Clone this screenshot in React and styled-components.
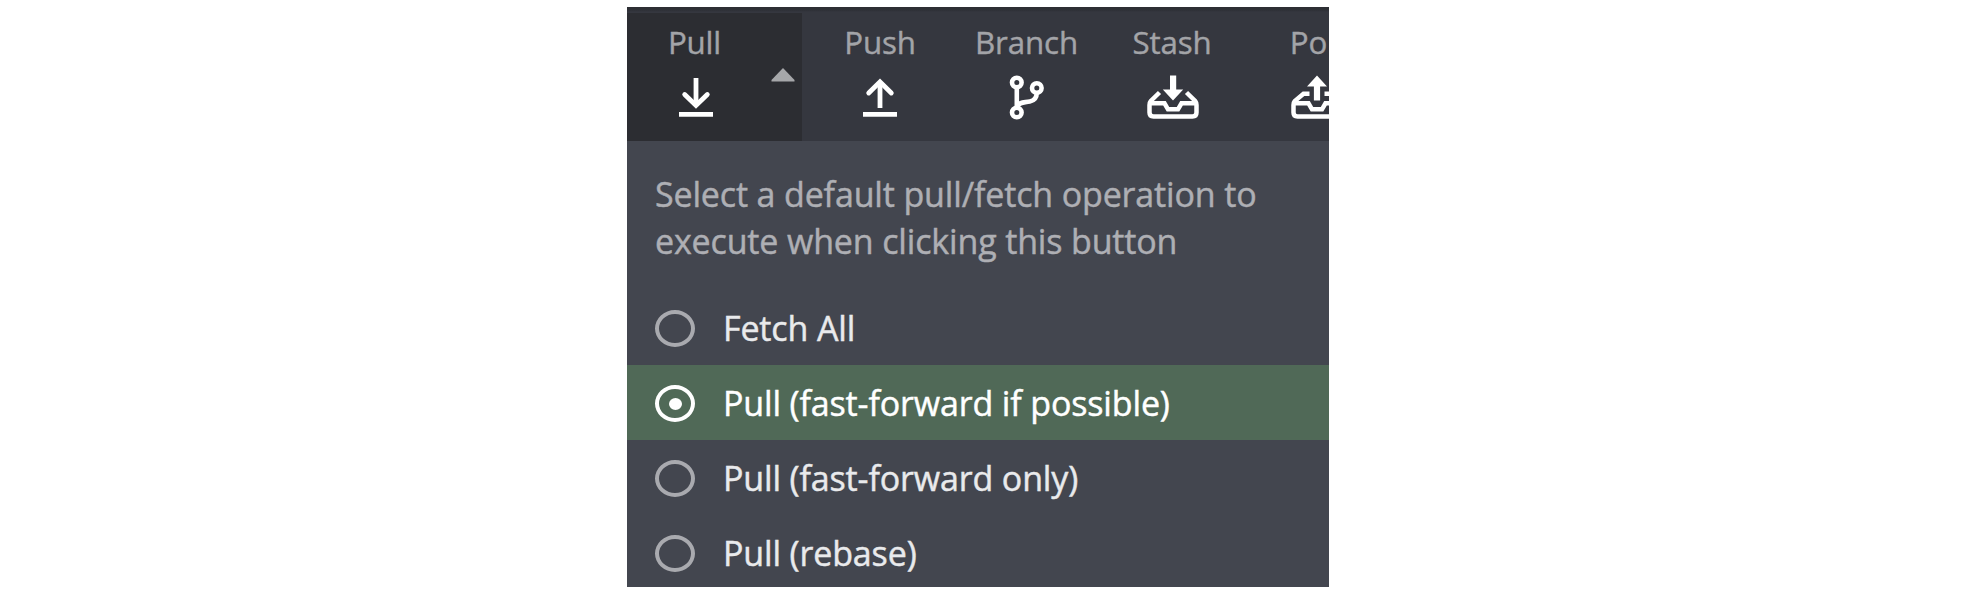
import React, { useState } from "react";
import styled, { createGlobalStyle } from "styled-components";

const GlobalStyle = createGlobalStyle`
  body {
    margin: 0;
    background: #ffffff;
    font-family: "Open Sans", "Noto Sans", sans-serif;
  }
`;

const Page = styled.main`
  box-sizing: border-box;
  height: 590px;
  padding: 7px 0 0 627px;
  overflow: hidden;
`;

const Panel = styled.section`
  width: 702px;
  height: 580px;
  overflow: hidden;
  background: #43464f;
`;

const Toolbar = styled.header`
  box-sizing: border-box;
  display: flex;
  height: 134px;
  padding-top: 6px;
  background: linear-gradient(#2d2e33 0, #2e3036 3px, #35373f 5px);
`;

const Tool = styled.button`
  box-sizing: border-box;
  flex: none;
  display: flex;
  flex-direction: column;
  align-items: center;
  width: ${(p) => p.$width}px;
  height: 128px;
  padding: 7px 0 0;
  border: 0;
  background: none;
  color: #ffffff;
  font: inherit;
`;

const PullGroup = styled.div`
  flex: none;
  display: flex;
  width: 175px;
  margin-right: 5px;
  background: #2c2d32;
`;

const CaretButton = styled.button`
  display: flex;
  flex: none;
  width: 38px;
  height: 69px;
  padding: 55px 0 0 7px;
  box-sizing: border-box;
  border: 0;
  background: none;
  color: #a6a7aa;
`;

const ToolLabel = styled.span`
  height: 44px;
  margin-right: ${(p) => p.$inset || 0}px;
  line-height: 44px;
  font-size: 31.3px;
  letter-spacing: -0.15px;
  color: #a3a4a8;
  -webkit-text-stroke: 0.4px currentColor;
  white-space: nowrap;
`;

const Icon = styled.svg`
  display: block;
  flex: none;
  margin-top: 8px;
  overflow: visible;
`;

const Prompt = styled.p`
  height: 149.4px;
  box-sizing: border-box;
  margin: 0;
  padding: 30px 0 0 28px;
  font-size: 34px;
  line-height: 47px;
  letter-spacing: -0.15px;
  color: #aeafb4;
  -webkit-text-stroke: 0.45px currentColor;
  white-space: pre-line;
`;

const Options = styled.ul`
  margin: 0;
  padding: 0;
  list-style: none;
`;

const Option = styled.li`
  box-sizing: border-box;
  display: flex;
  align-items: center;
  gap: 28px;
  height: 74.9px;
  padding: 2px 0 0 28px;
  background: ${(p) => (p.$selected ? "#506957" : "transparent")};
  color: ${(p) => (p.$selected ? "#ffffff" : "#e9eaec")};
  font-size: 34px;
  line-height: 47px;
  letter-spacing: -0.14px;
  -webkit-text-stroke: 0.45px currentColor;
  white-space: nowrap;
`;

const Radio = styled.span`
  box-sizing: border-box;
  flex: none;
  display: grid;
  place-items: center;
  width: 40px;
  height: 37px;
  border: ${(p) => (p.$selected ? "4px solid #ffffff" : "4px solid #a9aaaf")};
  border-radius: 50%;
`;

const Dot = styled.span`
  width: 13px;
  height: 12px;
  border-radius: 50%;
  background: #ffffff;
`;

const PullIcon = () => (
  <Icon width="52" height="48" viewBox="0 0 52 48" fill="none" stroke="currentColor" strokeWidth="4.8">
    <path d="M26 6v28" />
    <path d="M14.7 22.5L26 33.5l11.3-11" strokeLinecap="round" />
    <path d="M9 42.3h34" />
  </Icon>
);

const PushIcon = () => (
  <Icon width="52" height="48" viewBox="0 0 52 48" fill="none" stroke="currentColor" strokeWidth="4.8">
    <path d="M26 36V10" />
    <path d="M14.7 21L26 9.8 37.3 21" strokeLinecap="round" />
    <path d="M9 42.3h34" />
  </Icon>
);

const BranchIcon = () => (
  <Icon width="52" height="48" viewBox="0 0 52 48" fill="none" stroke="currentColor" strokeWidth="4.6">
    <circle cx="15.8" cy="10.5" r="4.8" />
    <circle cx="35.8" cy="16" r="4.8" />
    <circle cx="15.8" cy="40.5" r="4.8" />
    <path d="M15.800 15v21M35.800 20.500c0 5-2 8-7 9-6 1.300-10 0-12.500 5" />
  </Icon>
);

const StashIcon = () => (
  <Icon width="52" height="48" viewBox="0 0 52 48">
    <path
      d="M3 31.300h14.500l3.500 6h10l3.500-6H49M12.500 20.500L3.800 29Q2.500 30.500 2.500 33v7.500q0 4 4 4h39q4 0 4-4V33q0-2.500-1.300-4L39.500 20.500"
      fill="none"
      stroke="currentColor"
      strokeWidth="4.5"
    />
    <path d="M23 3.500h6.200v14h7L26 28.500 15.800 17.500H23z" fill="currentColor" />
  </Icon>
);

const PopIcon = () => (
  <Icon width="52" height="48" viewBox="0 0 52 48">
    <path
      d="M3 31.300h14.500l3.500 6h10l3.500-6H49M18.500 21.700H12.500L3.800 29Q2.500 30.500 2.500 33v7.500q0 4 4 4h39q4 0 4-4V33q0-2.500-1.300-4L39.500 21.700h-6"
      fill="none"
      stroke="currentColor"
      strokeWidth="4.5"
    />
    <path d="M26 3.500l10 11h-6.900v14h-6.200v-14H16z" fill="currentColor" />
  </Icon>
);

const TOOLS = [
  { label: "Push", width: 146, icon: PushIcon },
  { label: "Branch", width: 147, icon: BranchIcon },
  { label: "Stash", width: 146, icon: StashIcon, inset: 2 },
  { label: "Po", width: 141, icon: PopIcon, inset: 16 },
];

const OPERATIONS = [
  "Fetch All",
  "Pull (fast-forward if possible)",
  "Pull (fast-forward only)",
  "Pull (rebase)",
];

export default function App() {
  const [selected, setSelected] = useState(1);
  return (
    <Page>
      <GlobalStyle />
      <Panel>
        <Toolbar>
          <PullGroup>
            <Tool $width={137}>
              <ToolLabel $inset={2}>Pull</ToolLabel>
              <PullIcon />
            </Tool>
            <CaretButton aria-label="Pull options">
              <svg width="24" height="14" viewBox="0 0 24 14">
                <path d="M12 0L23.500 12v1.500H.5V12z" fill="currentColor" />
              </svg>
            </CaretButton>
          </PullGroup>
          {TOOLS.map(({ label, width, inset, icon: ToolIcon }) => (
            <Tool key={label} $width={width}>
              <ToolLabel $inset={inset}>{label}</ToolLabel>
              <ToolIcon />
            </Tool>
          ))}
        </Toolbar>
        <Prompt>{"Select a default pull/fetch operation to\nexecute when clicking this button"}</Prompt>
        <Options role="radiogroup">
          {OPERATIONS.map((name, i) => (
            <Option
              key={name}
              role="radio"
              aria-checked={i === selected}
              $selected={i === selected}
              onClick={() => setSelected(i)}
            >
              <Radio $selected={i === selected}>{i === selected && <Dot />}</Radio>
              {name}
            </Option>
          ))}
        </Options>
      </Panel>
    </Page>
  );
}
